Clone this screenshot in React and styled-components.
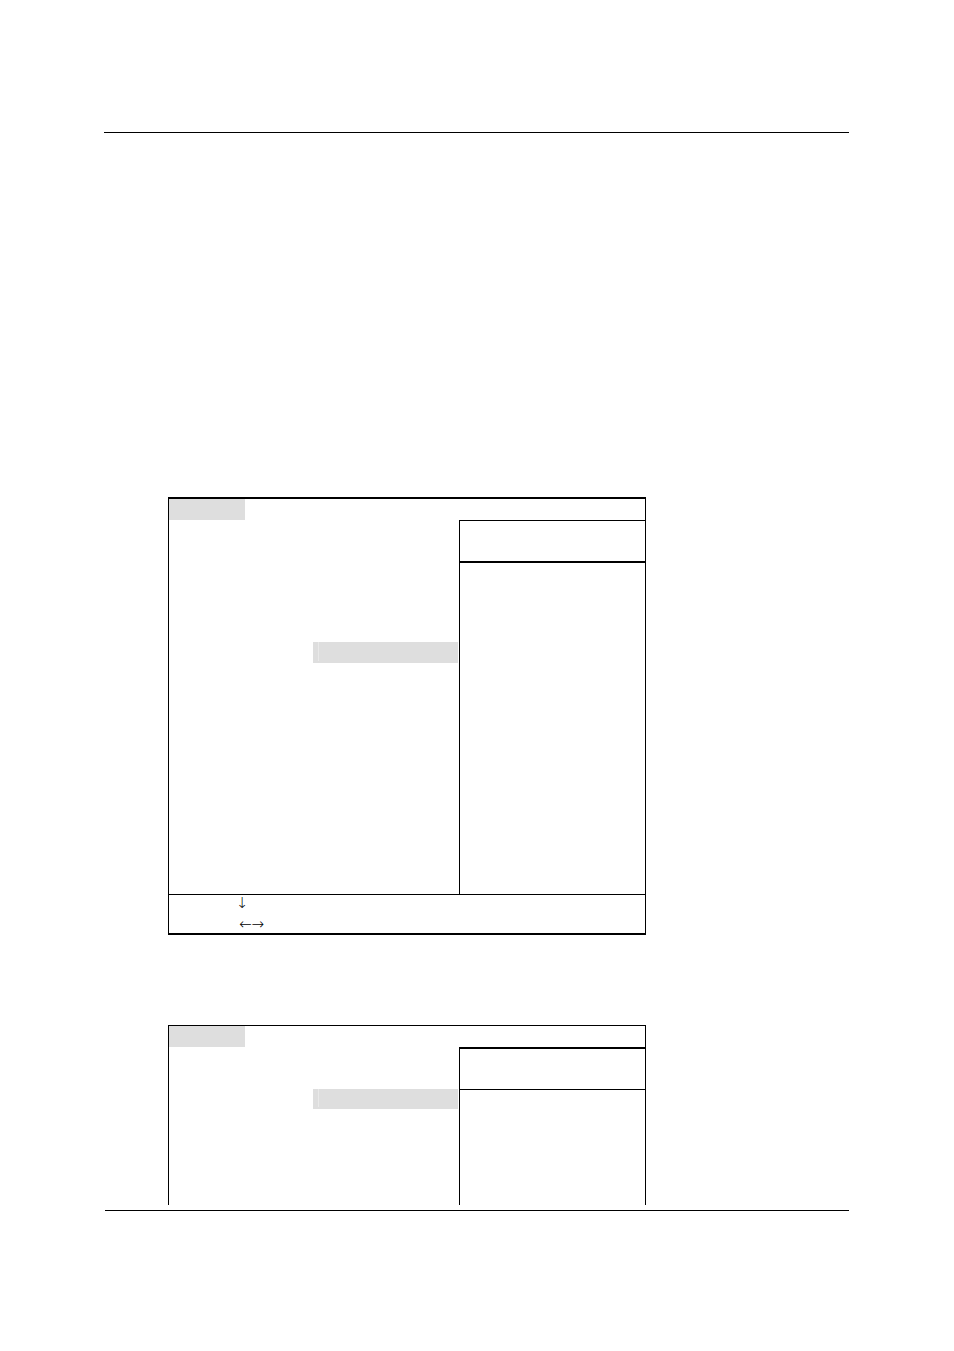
import React from "react";
import styled, { createGlobalStyle } from "styled-components";

const App = () => {
    return (
        <>
            <GlobalStyle />
            <Page>
                <Rule />
                <Content>
                    <Screen $top={2} $bottom={2}>
                        <MenuBar>
                            <ActiveTab />
                        </MenuBar>
                        <Body $height={374}>
                            <Settings $offset={122}>
                                <SelectedValue $height={21} />
                            </Settings>
                            <Side>
                                <HelpTitle $top={1} $bottom={2} />
                            </Side>
                        </Body>
                        <Keys>
                            <Key $width={6}>↓</Key>
                            <Key $width={25}>←→</Key>
                        </Keys>
                    </Screen>
                    <Screen $top={1} $bottom={0}>
                        <MenuBar>
                            <ActiveTab />
                        </MenuBar>
                        <Body $height={158}>
                            <Settings $offset={42}>
                                <SelectedValue $height={20} />
                            </Settings>
                            <Side>
                                <HelpTitle $top={2} $bottom={1} />
                            </Side>
                        </Body>
                    </Screen>
                </Content>
                <Rule $indent={1} />
            </Page>
        </>
    );
}
export default App;


const GlobalStyle = createGlobalStyle`
    * {
        box-sizing: border-box;
    }

    body {
        margin: 0;
        background-color: white;
        color: black;
        font-family: "DejaVu Sans", sans-serif;
    }
`

const Page = styled.main`
    padding: 132px 105px 140px 104px;
`

const Rule = styled.hr`
    height: 1px;
    margin: 0 0 0 ${({ $indent = 0 }) => $indent}px;
    border: 0;
    background-color: black;
`

const Content = styled.div`
    display: flex;
    flex-direction: column;
    gap: 90px;
    padding: 364px 0 5px 64px;
`

const Screen = styled.section`
    width: 100%;
    max-width: 478px;
    border: 1px solid black;
    border-top-width: ${({ $top }) => $top}px;
    border-bottom-width: ${({ $bottom }) => $bottom}px;
`

const MenuBar = styled.div`
    display: flex;
    height: 21px;
`

const ActiveTab = styled.div`
    width: 76px;
    background-color: #dedede;
`

const Body = styled.div`
    display: grid;
    grid-template-columns: 290fr 186fr;
    min-height: ${({ $height }) => $height}px;
`

const Settings = styled.div`
    display: grid;
    grid-template-columns: 144fr 145fr;
    align-items: start;
    padding: ${({ $offset }) => $offset}px 1px 0 0;
`

const SelectedValue = styled.div`
    grid-column: 2;
    display: flex;
    height: ${({ $height }) => $height}px;
    padding: 0 0 2px 5px;
    background-color: #dedede;

    &::before {
        content: "";
        width: 1px;
        background-color: #e9e9e9;
    }
`

const Side = styled.aside`
    border-left: 1px solid black;
`

const HelpTitle = styled.div`
    height: 43px;
    border: 0 solid black;
    border-top-width: ${({ $top }) => $top}px;
    border-bottom-width: ${({ $bottom }) => $bottom}px;
`

const Keys = styled.div`
    display: flex;
    flex-direction: column;
    gap: 4px;
    border-top: 1px solid black;
    padding-left: 70px;
    font-size: 15px;
    font-weight: 200;
    line-height: 17px;
`

const Key = styled.div`
    display: flex;
    justify-content: center;
    width: ${({ $width }) => $width}px;
`
